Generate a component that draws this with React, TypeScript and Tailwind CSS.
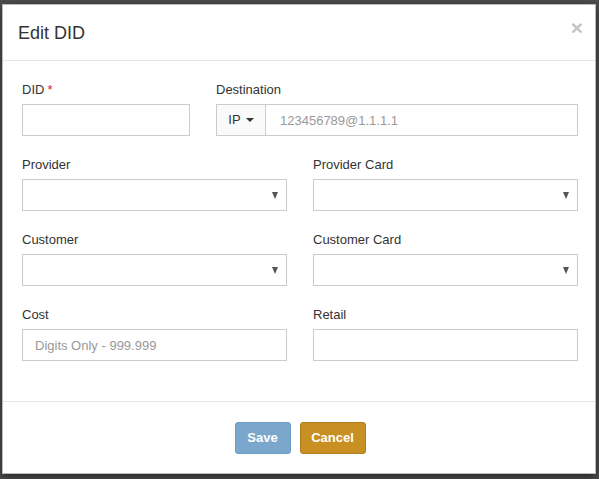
import React from "react";

const font = { fontFamily: "'Liberation Sans', Arial, sans-serif" };

function Caret() {
  return (
    <span className="inline-block h-0 w-0 border-x-[4px] border-t-[4px] border-x-transparent border-t-[#333]" />
  );
}

function Label({ children, required }: { children: React.ReactNode; required?: boolean }) {
  return (
    <label className="mb-[4px] block h-[21px] pt-[1px] text-[13px] leading-[20px] text-[#333]">
      {children}
      {required ? <span className="ml-[3px] text-[#e02020]">*</span> : null}
    </label>
  );
}

function TextInput({ placeholder }: { placeholder?: string }) {
  return (
    <input
      type="text"
      placeholder={placeholder}
      className="block h-[32px] w-full border border-[#ccc] bg-white px-3 text-[13px] text-[#555] outline-none placeholder:text-[#999]"
    />
  );
}

function Select() {
  return (
    <div className="flex h-[32px] w-full items-center justify-end border border-[#ccc] bg-white pr-[8px]">
      <span className="inline-block h-0 w-0 border-x-[3.5px] border-t-[7px] border-x-transparent border-t-[#555]" />
    </div>
  );
}

function Field({
  label,
  required,
  children,
  span,
}: {
  label: string;
  required?: boolean;
  children: React.ReactNode;
  span: string;
}) {
  return (
    <div className={`${span} mb-[18px]`}>
      <Label required={required}>{label}</Label>
      {children}
    </div>
  );
}

export default function App() {
  return (
    <div className="min-h-[479px] bg-[#4d4d4d] pl-[2px] pt-[4px]" style={font}>
      <div className="w-[594px] border border-[#bbb] bg-white shadow-[0_3px_9px_rgba(0,0,0,0.5)]">
        <div className="flex h-[56px] items-center justify-between border-b border-[#e5e5e5] pl-[15px] pr-[12px]">
          <h4 className="text-[18px] leading-[26px] text-[#333]">Edit DID</h4>
          <button
            type="button"
            className="-mt-[10px] text-[21px] font-bold leading-none text-[#c5c5c5]"
          >
            ×
          </button>
        </div>

        <div className="grid grid-cols-12 gap-x-[26px] pl-[19px] pr-[17px] pb-[22px] pt-[18px]">
          <Field label="DID" required span="col-span-4">
            <TextInput />
          </Field>
          <Field label="Destination" span="col-span-8">
            <div className="flex h-[32px]">
              <button
                type="button"
                className="flex w-[50px] items-center justify-center gap-[5px] border border-[#ccc] bg-[#fafafa] text-[13px] text-[#333]"
              >
                IP <Caret />
              </button>
              <input
                type="text"
                placeholder="123456789@1.1.1.1"
                className="h-full min-w-0 flex-1 border border-l-0 border-[#ccc] pl-[14px] pr-3 text-[13px] outline-none placeholder:text-[#999]"
              />
            </div>
          </Field>
          <Field label="Provider" span="col-span-6">
            <Select />
          </Field>
          <Field label="Provider Card" span="col-span-6">
            <Select />
          </Field>
          <Field label="Customer" span="col-span-6">
            <Select />
          </Field>
          <Field label="Customer Card" span="col-span-6">
            <Select />
          </Field>
          <Field label="Cost" span="col-span-6">
            <TextInput placeholder="Digits Only - 999.999" />
          </Field>
          <Field label="Retail" span="col-span-6">
            <TextInput />
          </Field>
        </div>

        <div className="flex justify-center gap-[9px] border-t border-[#e5e5e5] pb-[19px] pl-[2px] pt-[20px]">
          <button
            type="button"
            className="h-[32px] w-[56px] rounded-[3px] border border-[#6f9cc3] bg-[#7ba7cc] text-[13px] font-bold text-white"
          >
            Save
          </button>
          <button
            type="button"
            className="h-[32px] w-[66px] rounded-[3px] border border-[#b07d1b] bg-[#c89022] text-[13px] font-bold text-white"
          >
            Cancel
          </button>
        </div>
      </div>
    </div>
  );
}
